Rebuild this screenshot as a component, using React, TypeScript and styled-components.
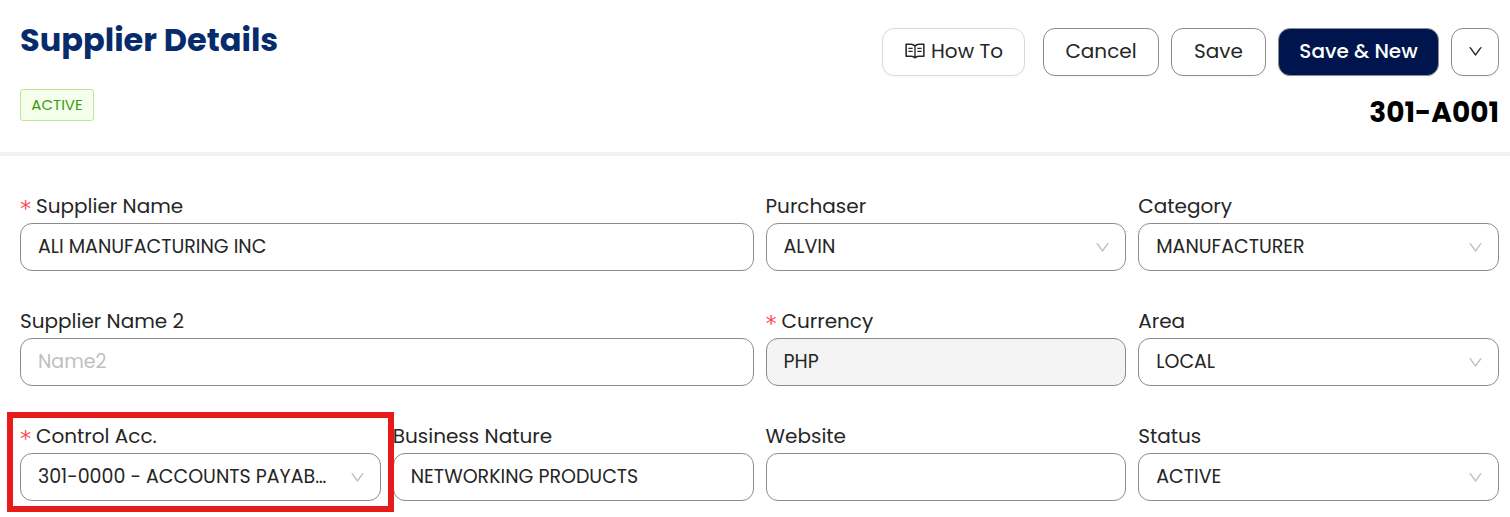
import React, { useId } from "react";
import styled, { createGlobalStyle, css } from "styled-components";
import { AiOutlineDown, AiOutlineRead } from "react-icons/ai";

const GlobalStyle = createGlobalStyle`
  *, *::before, *::after { box-sizing: border-box; }
  body {
    margin: 0;
    background: #fff;
    color: #262626;
    font-family: Poppins, Inter, "Liberation Sans", sans-serif;
    font-size: 20px;
    line-height: 24px;
  }
  button, input, select { font: inherit; color: inherit; }
`;

const Header = styled.header`
  display: flex;
  justify-content: space-between;
  padding: 16px 11px 21px 20px;
  border-bottom: 4px solid #f2f2f2;
`;

const TitleBlock = styled.div`
  display: flex;
  flex-direction: column;
  align-items: flex-start;
  gap: 25px;
`;

const Title = styled.h1`
  margin: 0;
  color: #072c6b;
  font-size: 32px;
  font-weight: 700;
  line-height: 48px;
`;

const Tag = styled.span`
  min-width: 74px;
  padding: 0 10px;
  border: 1px solid #b7eb8f;
  border-radius: 3px;
  background: #f6ffed;
  color: #389e0d;
  font-size: 15px;
  line-height: 30px;
  text-align: center;
`;

const ActionBlock = styled.div`
  display: flex;
  flex-direction: column;
  align-items: flex-end;
  gap: 19px;
  padding-top: 12px;
`;

const Actions = styled.div`
  display: flex;
  gap: 12px;
`;

const Button = styled.button<{ $width: number; $variant?: "primary" | "soft" }>`
  display: inline-flex;
  align-items: center;
  justify-content: center;
  gap: 5px;
  min-width: ${(p) => p.$width}px;
  height: 48px;
  padding: 0 0 2px;
  border: 1px solid #8c8c8c;
  border-radius: 12px;
  background: #fff;
  box-shadow: 0 2px 0 rgba(0, 0, 0, 0.02);
  white-space: nowrap;
  cursor: pointer;

  ${(p) =>
    p.$variant === "primary" &&
    css`
      background: #00154d;
      color: #fff;
      font-weight: 500;
    `}
  ${(p) =>
    p.$variant === "soft" &&
    css`
      margin-right: 6px;
      border-color: #d9d9d9;
    `}
`;

const Code = styled.strong`
  color: #000;
  font-size: 28px;
  font-weight: 700;
  line-height: 36px;
`;

const Form = styled.form`
  display: grid;
  grid-template-columns: repeat(4, minmax(0, 1fr));
  gap: 38px 12px;
  padding: 38px 11px 16px 20px;
`;

const FieldBox = styled.div<{ $wide?: boolean }>`
  position: relative;
  display: flex;
  flex-direction: column;
  gap: 5px;
  grid-column: span ${(p) => (p.$wide ? 2 : 1)};
`;

const Label = styled.label`
  display: flex;
  align-items: center;
  height: 24px;
  white-space: nowrap;
`;

const Required = styled.span`
  width: 16px;
  padding-top: 6px;
  color: #ff4d4f;
  font-family: "DejaVu Sans Mono", monospace;
  font-size: 22px;
  text-indent: -1px;
`;

const controlStyle = css`
  width: 100%;
  height: 48px;
  border: 1px solid #8c8c8c;
  border-radius: 12px;
  background: #fff;
  font-size: 19px;
  outline: none;
`;

const Input = styled.input`
  ${controlStyle}
  padding: 0 17px 2px;

  &::placeholder { color: #bfbfbf; opacity: 1; }
  &:disabled { background: #f4f4f4; color: #262626; }
`;

const SelectWrap = styled.div`
  display: grid;
  align-items: center;

  & > * { grid-area: 1 / 1; }
`;

const Select = styled.select`
  ${controlStyle}
  appearance: none;
  padding: 0 48px 0 17px;
  overflow: hidden;
  text-overflow: ellipsis;
  white-space: nowrap;
`;

const Arrow = styled(AiOutlineDown)`
  justify-self: end;
  margin-right: 15px;
  color: #bfbfbf;
  font-size: 17px;
  pointer-events: none;
`;

const Highlight = styled.div`
  position: absolute;
  inset: -12px -13px -11px;
  z-index: 1;
  border: 6px solid #e81b1b;
  pointer-events: none;
`;

type FieldProps = {
  label: string;
  value?: string;
  placeholder?: string;
  kind?: "input" | "select";
  required?: boolean;
  disabled?: boolean;
  wide?: boolean;
  highlighted?: boolean;
};

function Field({ label, value = "", placeholder, kind = "input", required, disabled, wide, highlighted }: FieldProps) {
  const id = useId();
  return (
    <FieldBox $wide={wide}>
      <Label htmlFor={id}>
        {required && <Required>*</Required>}
        {label}
      </Label>
      {kind === "select" ? (
        <SelectWrap>
          <Select id={id} defaultValue={value}>
            <option>{value}</option>
          </Select>
          <Arrow aria-hidden />
        </SelectWrap>
      ) : (
        <Input id={id} type="text" defaultValue={value} placeholder={placeholder} disabled={disabled} />
      )}
      {highlighted && <Highlight />}
    </FieldBox>
  );
}

export default function App() {
  return (
    <>
      <GlobalStyle />
      <Header>
        <TitleBlock>
          <Title>Supplier Details</Title>
          <Tag>ACTIVE</Tag>
        </TitleBlock>
        <ActionBlock>
          <Actions>
            <Button type="button" $width={143} $variant="soft">
              <AiOutlineRead size={22} aria-hidden />
              How To
            </Button>
            <Button type="button" $width={116}>Cancel</Button>
            <Button type="button" $width={95}>Save</Button>
            <Button type="button" $width={161} $variant="primary">Save &amp; New</Button>
            <Button type="button" $width={48} aria-label="More actions">
              <AiOutlineDown size={17} aria-hidden />
            </Button>
          </Actions>
          <Code>301-A001</Code>
        </ActionBlock>
      </Header>
      <Form>
        <Field label="Supplier Name" value="ALI MANUFACTURING INC" required wide />
        <Field label="Purchaser" value="ALVIN" kind="select" />
        <Field label="Category" value="MANUFACTURER" kind="select" />
        <Field label="Supplier Name 2" placeholder="Name2" wide />
        <Field label="Currency" value="PHP" required disabled />
        <Field label="Area" value="LOCAL" kind="select" />
        <Field label="Control Acc." value="301-0000 - ACCOUNTS PAYABLE" kind="select" required highlighted />
        <Field label="Business Nature" value="NETWORKING PRODUCTS" />
        <Field label="Website" />
        <Field label="Status" value="ACTIVE" kind="select" />
      </Form>
    </>
  );
}
